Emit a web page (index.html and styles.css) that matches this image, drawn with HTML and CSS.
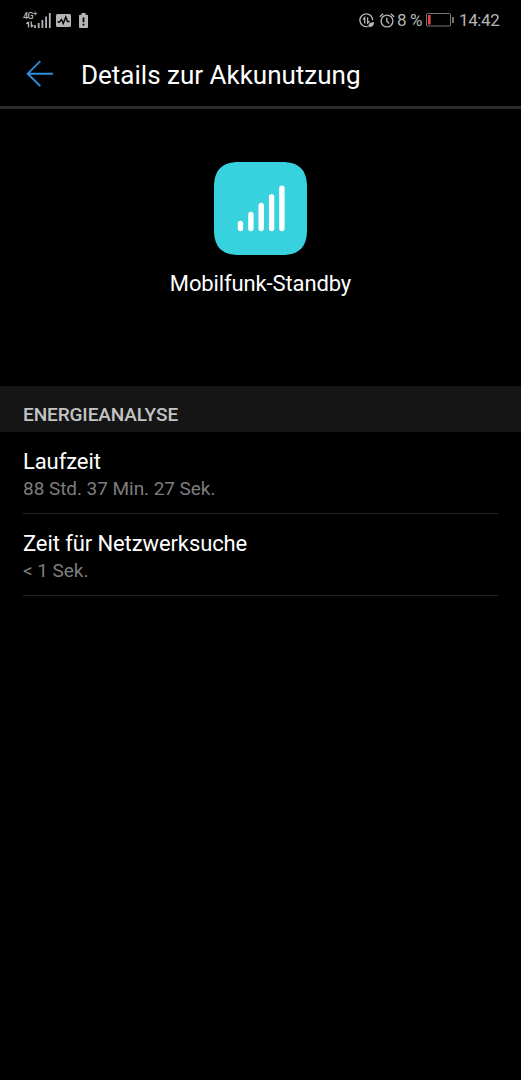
FILE: index.html
```html
<!DOCTYPE html>
<html lang="de">
<head>
    <meta charset="UTF-8">
    <meta name="viewport" content="width=device-width, initial-scale=1.0">
    <title>Details zur Akkunutzung</title>
    <link rel="stylesheet" href="styles.css">
</head>
<body>

<div class="status-bar">
    <div class="status-left">
        <div class="network">
            <div class="network-type">
                <span class="network-label">4G<sup>+</sup></span>
                <svg class="data-arrows" width="8" height="7" viewBox="0 0 8 7">
                    <path d="M2.5 6.5V1M.5 3l2-2.2M5.3 .5V6M7.3 4L5.3 6.2" fill="none" stroke="#b5b5b5" stroke-width="1.3"/>
                </svg>
            </div>
            <svg class="signal" width="17" height="15" viewBox="0 0 17 15">
                <path d="M1 12.3V15M4.7 10V15M8.4 7V15M12.1 3.5V15M15.8 0V15" stroke="#b5b5b5" stroke-width="1.8"/>
            </svg>
        </div>
        <svg class="pulse" width="15" height="13" viewBox="0 0 15 13">
            <rect width="15" height="13" rx="1.5" fill="#b5b5b5"/>
            <path d="M1.5 8H3.5L5.5 5.5L7.3 9.5L9.8 3L11.5 7.5H13.5" fill="none" stroke="#000" stroke-width="1.4"/>
        </svg>
        <svg class="battery-alert" width="9" height="15" viewBox="0 0 9 15">
            <path d="M2.5 0h4v1.7H8a1 1 0 0 1 1 1V14a1 1 0 0 1-1 1H1a1 1 0 0 1-1-1V2.7a1 1 0 0 1 1-1h1.5z" fill="#b5b5b5"/>
            <path d="M4.5 4.5V9.3M4.5 10.7V12.5" stroke="#000" stroke-width="1.8"/>
        </svg>
    </div>
    <div class="status-right">
        <svg class="data-saver" width="16" height="15" viewBox="0 0 16 15">
            <path d="M13.7 7.3A6.4 6.4 0 1 0 8.7 13.5" fill="none" stroke="#b5b5b5" stroke-width="1.4"/>
            <path d="M5.7 10.5V4.7L4 6.5M8.6 4.2V10L10.4 8.2" fill="none" stroke="#b5b5b5" stroke-width="1.3"/>
            <path d="M9.5 14.5C9 10.500 11 9.2 15 9C15.2 12.5 13.2 14.5 10.7 13.8z" fill="#b5b5b5"/>
        </svg>
        <svg class="alarm" width="16" height="15" viewBox="0 0 16 15">
            <circle cx="8" cy="8" r="5.9" fill="none" stroke="#b5b5b5" stroke-width="1.4"/>
            <path d="M.8 3.7L4.2 .8M11.8 .8L15.2 3.7M7.8 4.7V8.3L10.2 10.5" fill="none" stroke="#b5b5b5" stroke-width="1.4"/>
        </svg>
        <span class="percent">8 %</span>
        <svg class="battery" width="28" height="14" viewBox="0 0 28 14">
            <rect x=".5" y=".5" width="24" height="12.5" rx="1" fill="none" stroke="#777"/>
            <rect x="2" y="2" width="2.6" height="9.5" fill="#e8483c"/>
            <path d="M27 4V10" stroke="#999" stroke-width="1.5"/>
        </svg>
        <span class="clock">14:42</span>
    </div>
</div>

<div class="header">
    <svg class="back" width="28" height="28" viewBox="0 0 28 28">
        <path d="M27 13.7H1.7M14.3 1.2L1.7 13.7L14.3 26.2" fill="none" stroke="#2f8fdd" stroke-width="1.9"/>
    </svg>
    <h1>Details zur Akkunutzung</h1>
</div>

<div class="app">
    <svg class="app-icon" width="93" height="93" viewBox="0 0 93 93">
        <path d="M0 25C0 8 8 0 25 0H68C85 0 93 8 93 25V68C93 85 85 93 68 93H25C8 93 0 85 0 68z" fill="#38d2de"/>
        <path d="M26.5 61.5V66.5M36.9 52.5V66.5M47.2 43.5V66.5M57.6 34.7V66.5M67.9 26.3V66.5" stroke="#fff" stroke-width="5.4" stroke-linecap="round"/>
    </svg>
    <div class="app-name">Mobilfunk-Standby</div>
</div>

<h2>ENERGIEANALYSE</h2>

<div class="list">
    <div class="item">
        <div class="item-title">Laufzeit</div>
        <div class="item-value">88 Std. 37 Min. 27 Sek.</div>
    </div>
    <div class="item">
        <div class="item-title">Zeit für Netzwerksuche</div>
        <div class="item-value">&lt; 1 Sek.</div>
    </div>
</div>

</body>
</html>
```
FILE: styles.css
```css
body {
    font-family: Roboto, sans-serif;
    background-color: #000;
    color: #fff;
    height: 1080px;
    margin: 0;
}
svg {
    display: block;
    flex-shrink: 0;
}
.status-bar {
    display: flex;
    justify-content: space-between;
    box-sizing: border-box;
    height: 40px;
    padding: 0 22px 0 23px;
    color: #b5b5b5;
}
.status-left, .status-right {
    display: flex;
    align-items: center;
}
.network {
    display: flex;
    height: 15px;
}
.network-type {
    width: 11px;
}
.network-label {
    display: block;
    height: 8px;
    font-size: 9px;
    line-height: 7px;
    font-weight: 500;
    letter-spacing: -0.5px;
    white-space: nowrap;
}
.network-label sup {
    font-size: 7px;
    line-height: 0;
    vertical-align: 3px;
}
.data-arrows {
    margin-left: 3px;
}
.pulse {
    margin-left: 5px;
}
.battery-alert {
    margin-left: 8px;
}
.alarm {
    margin-left: 4px;
}
.percent, .clock {
    font-size: 17px;
    line-height: 40px;
    letter-spacing: -0.4px;
    white-space: nowrap;
}
.percent {
    width: 27px;
    margin-left: 2px;
}
.battery {
    margin-left: 2px;
}
.clock {
    width: 40px;
    margin-left: 5px;
}
.header {
    display: flex;
    align-items: center;
    box-sizing: border-box;
    height: 69px;
    padding: 2px 26px 0;
    border-bottom: 3px solid #2b2b2b;
}
h1 {
    margin: 2px 0 0 27px;
    font-size: 26px;
    line-height: 34px;
    font-weight: 400;
}
.app {
    display: flex;
    flex-direction: column;
    align-items: center;
    box-sizing: border-box;
    height: 277px;
    padding-top: 53px;
}
.app-name {
    margin-top: 14px;
    font-size: 22px;
    line-height: 30px;
    letter-spacing: -0.12px;
}
h2 {
    box-sizing: border-box;
    height: 46px;
    margin: 0;
    padding: 16px 23px 0;
    background-color: #151515;
    color: #c4c4c4;
    font-size: 19px;
    line-height: 25px;
    font-weight: 500;
    letter-spacing: -0.1px;
}
.list {
    padding: 0 23px;
}
.item {
    box-sizing: border-box;
    height: 82px;
    padding-top: 16px;
    border-bottom: 1px solid #262626;
}
.item-title {
    font-size: 22px;
    line-height: 28px;
    letter-spacing: -0.1px;
}
.item-value {
    color: #7d7d7d;
    font-size: 19px;
    line-height: 26px;
    letter-spacing: -0.05px;
}
```
